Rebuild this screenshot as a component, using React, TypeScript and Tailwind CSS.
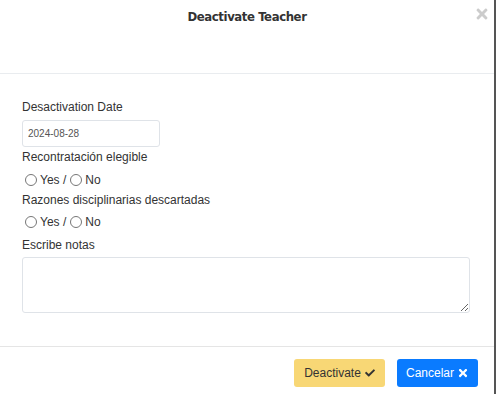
import React from 'react';
import { FaCheck, FaTimes } from 'react-icons/fa';

function YesNo({ name }: { name: string }) {
  return (
    <div className="flex items-center h-[18px] pl-[3px] text-[12px] text-[#333]">
      <input type="radio" name={name} className="m-0 w-[12px] h-[12px]" />
      <span className="ml-[3px]">Yes /</span>
      <input type="radio" name={name} className="m-0 ml-[4px] w-[12px] h-[12px]" />
      <span className="ml-[3px]">No</span>
    </div>
  );
}

export default function App() {
  return (
    <div className="w-[496px] h-[394px] flex bg-white font-['Liberation_Sans',Arial,sans-serif]">
      <div className="flex-1 flex flex-col">
        <header className="h-[74px] border-b border-[#e9ecef] relative flex justify-center pt-[7px]">
          <h1 className="text-[13px] font-bold text-[#333] font-['DejaVu_Sans_Condensed',sans-serif] tracking-[-0.4px]">
            Deactivate Teacher
          </h1>
          <button className="absolute right-[4px] top-[6px] text-[#cccccc]">
            <FaTimes size={16} />
          </button>
        </header>

        <div className="flex-1 pl-[22px] pr-[24px] pt-[24px] flex flex-col">
          <label className="text-[12px] leading-[18px] text-[#333]">Desactivation Date</label>
          <input
            readOnly
            value="2024-08-28"
            className="mt-[4px] w-[138px] h-[27px] border border-[#dfe3e8] rounded-[3px] px-[5px] text-[10px] text-[#555] outline-none"
          />
          <label className="mt-[1px] text-[12px] leading-[18px] text-[#333]">Recontratación elegible</label>
          <div className="mt-[5px]">
            <YesNo name="rehire" />
          </div>
          <label className="mt-[2px] text-[12px] leading-[18px] text-[#333]">Razones disciplinarias descartadas</label>
          <div className="mt-[4px]">
            <YesNo name="disc" />
          </div>
          <label className="mt-[5px] text-[12px] leading-[18px] text-[#333]">Escribe notas</label>
          <textarea className="mt-[3px] h-[56px] w-full border border-[#dfe3e8] rounded-[3px] outline-none" />
        </div>

        <footer className="h-[48px] border-t border-[#e5e5e5] flex justify-end items-start pt-[12px] pr-[16px] gap-[12px]">
          <button className="h-[28px] w-[91px] bg-[#f8d775] rounded-[3px] text-[12px] text-[#333] flex items-center justify-center gap-[4px]">
            Deactivate <FaCheck size={10} />
          </button>
          <button className="h-[28px] w-[81px] bg-[#0a7bff] rounded-[3px] text-[12px] text-white flex items-center justify-center gap-[3px]">
            Cancelar <FaTimes size={12} />
          </button>
        </footer>
      </div>
      <div className="w-[2px] bg-[#555]" />
    </div>
  );
}
